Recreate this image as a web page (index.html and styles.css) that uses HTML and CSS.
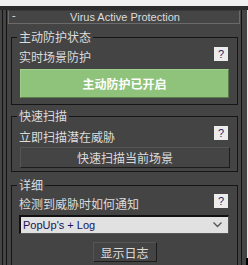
FILE: index.html
```html
<!DOCTYPE html>
<html>
<head>
<meta charset="utf-8">
<link rel="stylesheet" href="styles.css">
</head>
<body>
<div class="topband"></div>
<div class="window">
  <div class="panel">
    <div class="rollout">
      <div class="rollhead"><span class="minus">-</span><span class="rolltitle">Virus Active Protection</span></div>
      <div class="rollbody">
        <fieldset class="group g1">
          <legend>主动防护状态</legend>
          <div class="row"><span class="label">实时场景防护</span><span class="help">?</span></div>
          <div class="green">主动防护已开启</div>
        </fieldset>
        <fieldset class="group g2">
          <legend>快速扫描</legend>
          <div class="row"><span class="label">立即扫描潜在威胁</span><span class="help">?</span></div>
          <div class="btn wide">快速扫描当前场景</div>
        </fieldset>
        <fieldset class="group g3">
          <legend>详细</legend>
          <div class="row"><span class="label">检测到威胁时如何通知</span><span class="help">?</span></div>
          <div class="select"><span class="seltext">PopUp's + Log</span>
            <svg class="chev" width="9" height="6" viewBox="0 0 9 6"><path d="M0.5 0.5 L4.5 4.5 L8.5 0.5" fill="none" stroke="#555" stroke-width="1.3"/></svg>
          </div>
          <div class="btn log">显示日志</div>
        </fieldset>
      </div>
    </div>
  </div>
  <div class="edge"><div class="corner"></div></div>
</div>
</body>
</html>
```

FILE: styles.css
```css
html, body {
  margin: 0;
  padding: 0;
  background: #444444;
  width: 248px;
  height: 265px;
  overflow: hidden;
  font-family: "Noto Sans CJK SC", "Liberation Sans", sans-serif;
  font-size: 12px;
  color: #dcdcdc;
}
.topband {
  height: 6px;
  background: #f0f0f0;
}
.window {
  display: flex;
  height: 259px;
  background: #444444;
  border-top: 4px solid #2c2c2c;
  box-sizing: border-box;
  padding-left: 2px;
}
.panel {
  width: 240px;
  box-sizing: border-box;
  border-left: 1px solid #141414;
  border-right: 1px solid #141414;
  padding-left: 3px;
  display: flex;
}
.rollout {
  flex: 1;
  border-left: 1px solid #141414;
  padding-left: 1px;
  display: flex;
  flex-direction: column;
}
.rollhead {
  position: relative;
  height: 12px;
  width: 230px;
  box-sizing: content-box;
  border: 1px solid #6a6a6a;
  border-top-color: #383838;
  background: #454545;
  display: flex;
  justify-content: center;
  align-items: center;
}
.minus {
  position: absolute;
  left: 3px;
  top: -2px;
  font-family: "Liberation Sans", sans-serif;
  font-size: 11px;
  color: #e0e0e0;
}
.rolltitle {
  font-family: "Liberation Sans", sans-serif;
  font-size: 11px;
  color: #dcdcdc;
  line-height: 12px;
  margin-left: 2px;
}
.rollbody {
  display: flex;
  flex-direction: column;
  padding-left: 3px;
  padding-top: 6px;
}
.group {
  margin: 0;
  width: 227px;
  box-sizing: border-box;
  border: 1px solid #161616;
  padding: 3px 8px 6px 8px;
  display: flex;
  flex-direction: column;
}
.group legend {
  padding: 0 2px;
  margin-left: -3px;
  line-height: 14px;
  height: 14px;
  color: #dcdcdc;
}
.g2 { margin-top: 4px; padding-bottom: 3px; }
.g3 { margin-top: 6px; padding-top: 2px; padding-bottom: 8px; }
.row {
  display: flex;
  justify-content: space-between;
  align-items: flex-start;
}
.label {
  margin-left: -1px;
  padding-top: 3px;
  line-height: 14px;
}
.g2 .label { padding-top: 4px; }
.help {
  width: 14px;
  height: 14px;
  background: #ececec;
  color: #1a2a6a;
  font-family: "Liberation Sans", sans-serif;
  font-size: 11px;
  line-height: 14px;
  text-align: center;
  margin-right: 1px;
}
.green {
  margin-top: 5px;
  height: 29px;
  background: #8fc27a;
  border: 1px solid #5b7d4c;
  border-top-color: #9fcf8a;
  border-left-color: #9fcf8a;
  box-sizing: border-box;
  color: #ffffff;
  font-weight: bold;
  display: flex;
  align-items: center;
  justify-content: center;
}
.btn {
  box-sizing: border-box;
  height: 21px;
  background: #444444;
  border: 1px solid #1c1c1c;
  border-top-color: #555555;
  border-left-color: #555555;
  display: flex;
  align-items: center;
  justify-content: center;
  color: #dcdcdc;
  font-size: 12px;
}
.wide {
  margin-top: 3px;
  margin-right: -1px;
}
.select {
  margin-top: 4px;
  margin-left: -1px;
  height: 19px;
  box-sizing: border-box;
  background: #e1e1e1;
  border-top: 2px solid #111;
  border-left: 2px solid #111;
  border-right: 1px solid #555;
  border-bottom: 1px solid #555;
  display: flex;
  align-items: center;
  justify-content: space-between;
  padding: 0 6px 0 2px;
}
.seltext {
  font-family: "Liberation Sans", sans-serif;
  font-size: 11px;
  color: #14145a;
}
.log {
  margin-top: 8px;
  align-self: center;
  width: 64px;
  height: 20px;
}
.edge {
  flex: 1;
  position: relative;
  border-right: 1px solid #e8e8e8;
}
.corner {
  position: absolute;
  right: -1px;
  bottom: 0;
  width: 2px;
  height: 7px;
  background: #000;
}
```
